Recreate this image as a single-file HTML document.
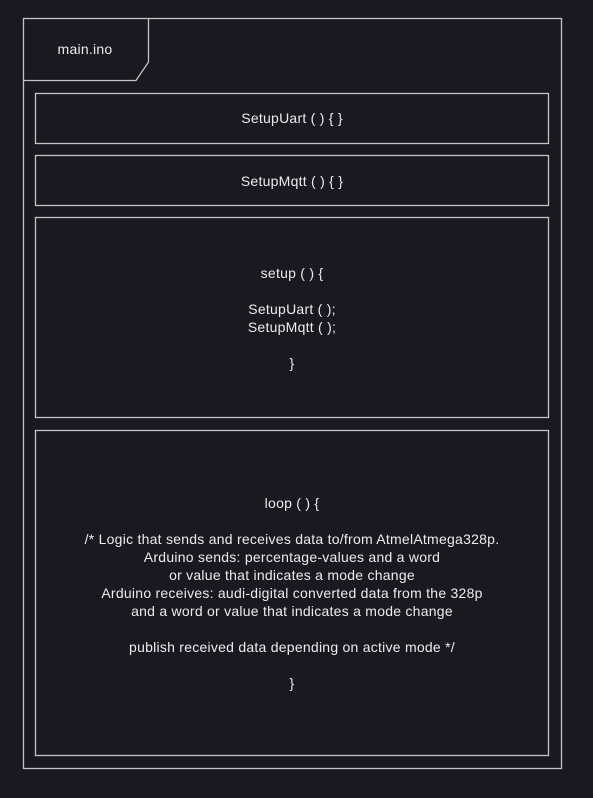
<!DOCTYPE html>
<html><head><style>
html,body{margin:0;padding:0;background:#1a1820;}
svg{display:block}
text{font-family:"Liberation Sans",sans-serif;font-size:14px;fill:#ececec;text-anchor:middle;letter-spacing:0.25px;}
</style></head><body>
<svg width="593" height="798" viewBox="0 0 593 798">
<rect width="593" height="798" fill="#1a1820"/>
<g fill="none" stroke="#c4c4c4" stroke-width="1.3">
<rect x="23.5" y="18.5" width="538" height="750"/>
<path d="M23.5 80.5 H136 L148.5 62 V18.5"/>
<rect x="35.5" y="93.5" width="513" height="50"/>
<rect x="35.5" y="155.5" width="513" height="50"/>
<rect x="35.5" y="217.5" width="513" height="200"/>
<rect x="35.5" y="430.5" width="513" height="325"/>
</g>
<text x="85" y="54">main.ino</text>
<text x="292" y="123">SetupUart ( ) { }</text>
<text x="292" y="186">SetupMqtt ( ) { }</text>
<text x="292" y="278">setup ( ) {</text>
<text x="292" y="314">SetupUart ( );</text>
<text x="292" y="332">SetupMqtt ( );</text>
<text x="292" y="368">}</text>
<text x="292" y="508">loop ( ) {</text>
<text x="292" y="544">/* Logic that sends and receives data to/from AtmelAtmega328p.</text>
<text x="292" y="562">Arduino sends: percentage-values and a word</text>
<text x="292" y="580">or value that indicates a mode change</text>
<text x="292" y="598">Arduino receives: audi-digital converted data from the 328p</text>
<text x="292" y="616">and a word or value that indicates a mode change</text>
<text x="292" y="652">publish received data depending on active mode */</text>
<text x="292" y="688">}</text>
</svg>
</body></html>
